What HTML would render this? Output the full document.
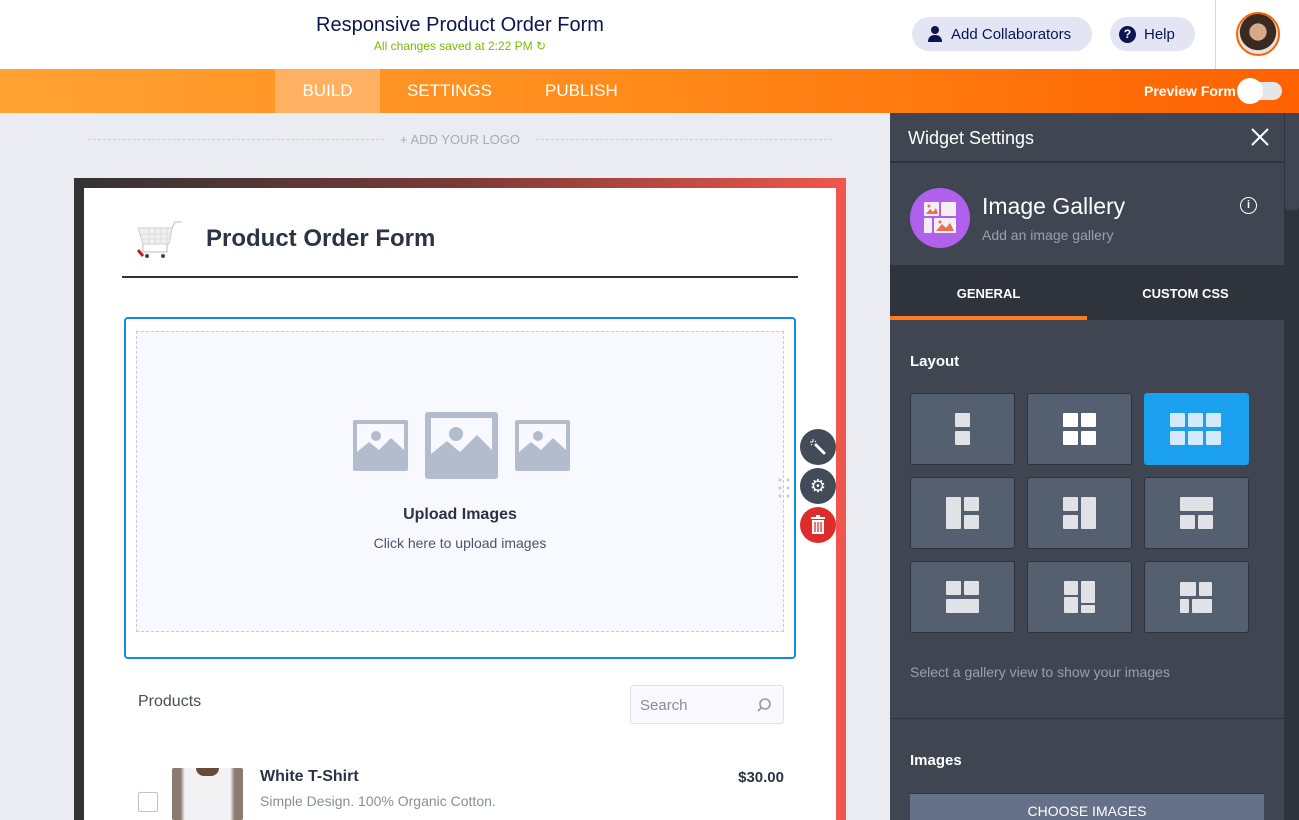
<!DOCTYPE html>
<html style="width:1299px;height:820px;overflow:hidden"><head><meta charset="utf-8"><style>
*{box-sizing:border-box;margin:0;padding:0}
html,body{width:1299px;height:820px;overflow:hidden}
body{font-family:"Liberation Sans",sans-serif;background:#ebecf1;position:relative}
.a{position:absolute}
.tile{position:absolute;width:105px;height:72px;background:#545f6f;border:1px solid #2f343c;border-radius:3px}
.tile.sel{background:#1ba0ef;border-color:#1ba0ef}
.tile i{position:absolute;background:#e0e2e6;border-radius:1px}
.tile.sel i{background:#d4e9f9}
</style></head><body>
<div class="a" style="left:0;top:0;width:1299px;height:69px;background:#fff"></div>
<div class="a" style="left:260px;top:14px;width:400px;text-align:center;font-size:20px;color:#0a1551">Responsive Product Order Form</div>
<div class="a" style="left:260px;top:39px;width:400px;text-align:center;font-size:12px;color:#78bb07">All changes saved at 2:22 PM ↻</div>
<div class="a" style="left:912px;top:17px;width:180px;height:34px;border-radius:17px;background:#e3e5f5;font-size:15px;color:#0a1551;padding:9px 0 0 39px">Add Collaborators</div>
<svg class="a" style="left:926px;top:25px" width="18" height="18" viewBox="0 0 18 18"><circle cx="9" cy="5" r="4" fill="#0a1551"/><path d="M2 17c0-5 3-7 7-7s7 2 7 7z" fill="#0a1551"/></svg>
<div class="a" style="left:1110px;top:17px;width:85px;height:34px;border-radius:17px;background:#e3e5f5;font-size:15px;color:#0a1551;padding:9px 0 0 34px">Help</div>
<div class="a" style="left:1119px;top:26px;width:17px;height:17px;border-radius:50%;background:#0a1551;color:#fff;font-size:12px;font-weight:bold;text-align:center;line-height:17px">?</div>
<div class="a" style="left:1215px;top:0;width:1px;height:69px;background:#d8dae8"></div>
<div class="a" style="left:1236px;top:12px;width:44px;height:44px;border-radius:50%;border:2px solid #ff6100;background:radial-gradient(circle at 50% 45%,#d8a88a 0 28%,#3a2a22 30% 60%,#e8e2dc 62%)"></div>
<div class="a" style="left:0;top:69px;width:1299px;height:44px;background:linear-gradient(90deg,#ffa233,#ff8a1a 50%,#ff6100)"></div>
<div class="a" style="left:275px;top:69px;width:105px;height:44px;background:#ffb061"></div>
<div class="a" style="left:275px;top:81px;width:105px;text-align:center;color:#fff;font-size:17px">BUILD</div>
<div class="a" style="left:407px;top:81px;color:#fff;font-size:17px">SETTINGS</div>
<div class="a" style="left:545px;top:81px;color:#fff;font-size:17px">PUBLISH</div>
<div class="a" style="left:1144px;top:83px;color:#fff;font-size:14px;font-weight:bold">Preview Form</div>
<div class="a" style="left:1240px;top:82px;width:42px;height:18px;border-radius:9px;background:#e4e6ea"></div>
<div class="a" style="left:1237px;top:78px;width:26px;height:26px;border-radius:50%;background:#fff"></div>
<div class="a" style="left:88px;top:139px;width:296px;border-top:1px dashed #ccced6"></div>
<div class="a" style="left:536px;top:139px;width:296px;border-top:1px dashed #ccced6"></div>
<div class="a" style="left:384px;top:132px;width:152px;text-align:center;font-size:13px;color:#a8aab5">+ ADD YOUR LOGO</div>
<div class="a" style="left:74px;top:178px;width:772px;height:642px;background:linear-gradient(90deg,#333 0%,#7a3a36 50%,#f0574c 100%)"></div>
<div class="a" style="left:74px;top:188px;width:10px;height:632px;background:#333"></div>
<div class="a" style="left:836px;top:188px;width:10px;height:632px;background:#f0574c"></div>
<div class="a" style="left:84px;top:188px;width:752px;height:632px;background:#fff"></div>
<svg class="a" style="left:135px;top:220px" width="52" height="42" viewBox="0 0 52 42"><path d="M3 8h34l-3 16H8z" fill="#f0f0f0" stroke="#ccc"/><path d="M14 8v16M20 8v16M26 8v16M32 8v16M5 14h31M6 19h30" stroke="#ddd"/><path d="M37 8l3-6h7M8 24v8h24v-8" stroke="#bbb" fill="none"/><circle cx="12" cy="36" r="2" fill="#444"/><circle cx="28" cy="36" r="2" fill="#444"/><path d="M3 30l5 6" stroke="#c02030" stroke-width="3"/></svg>
<div class="a" style="left:206px;top:225px;font-size:24px;font-weight:bold;color:#2c3345">Product Order Form</div>
<div class="a" style="left:122px;top:276px;width:676px;height:2px;background:#2c3345"></div>
<div class="a" style="left:124px;top:317px;width:672px;height:342px;border:2px solid #0f8ddb;border-radius:4px"></div>
<div class="a" style="left:136px;top:331px;width:648px;height:301px;border:1px dashed #c8cad3;background:#f8f9fe"></div>
<svg class="a" style="left:353px;top:412px" width="218" height="68" viewBox="0 0 218 68"><g fill="#b3bccc"><rect x="0" y="8" width="55" height="51" rx="2"/><rect x="72" y="0" width="73" height="67" rx="3"/><rect x="162" y="8" width="55" height="51" rx="2"/></g><g fill="#f8f9fe"><rect x="4" y="12" width="47" height="34"/><rect x="78" y="6" width="61" height="46"/><rect x="166" y="12" width="47" height="34"/></g><g fill="#b3bccc"><circle cx="23" cy="24" r="5"/><path d="M4 46v-6l12-10 10 8 12-12 13 12v8z"/><circle cx="103" cy="22" r="7"/><path d="M78 52v-10l16-13 13 11 17-17 15 15v14z"/><circle cx="185" cy="24" r="5"/><path d="M166 46v-6l12-10 10 8 12-12 13 12v8z"/></g></svg>
<div class="a" style="left:136px;top:506px;width:648px;text-align:center;font-size:16px;font-weight:bold;color:#2c3345">Upload Images</div>
<div class="a" style="left:136px;top:535px;width:648px;text-align:center;font-size:14px;color:#4a5468">Click here to upload images</div>
<svg class="a" style="left:778px;top:478px" width="12" height="20"><g fill="#c8ccd8"><circle cx="2" cy="2" r="1.5"/><circle cx="10" cy="2" r="1.5"/><circle cx="2" cy="10" r="1.5"/><circle cx="10" cy="10" r="1.5"/><circle cx="2" cy="18" r="1.5"/><circle cx="10" cy="18" r="1.5"/></g></svg>
<div class="a" style="left:800px;top:429px;width:36px;height:36px;border-radius:50%;background:#434a58"></div>
<svg class="a" style="left:808px;top:437px" width="20" height="20" viewBox="0 0 20 20"><path d="M8 8l8 8" stroke="#fff" stroke-width="3" stroke-linecap="round"/><path d="M5 2v3M2 5h3M8 4l-1 1M3 8l1-1" stroke="#fff" stroke-width="1"/></svg>
<div class="a" style="left:800px;top:468px;width:36px;height:36px;border-radius:50%;background:#434a58;color:#fff;font-size:18px;text-align:center;line-height:36px">⚙</div>
<div class="a" style="left:800px;top:507px;width:36px;height:36px;border-radius:50%;background:#dc2c2c"></div>
<svg class="a" style="left:810px;top:515px" width="16" height="20" viewBox="0 0 16 20"><rect x="1" y="2" width="14" height="2" fill="#fff"/><rect x="6" y="0" width="4" height="2" fill="#fff"/><path d="M2 5h12v14H2z" fill="#fff"/><path d="M5 7v10M8 7v10M11 7v10" stroke="#dc2c2c" stroke-width="1.3"/></svg>
<div class="a" style="left:138px;top:693px;font-size:16px;color:#4a4d55">Products</div>
<div class="a" style="left:630px;top:685px;width:154px;height:39px;border:1px solid #dfe1ea;border-radius:3px;background:#f8f8fe;font-size:15px;color:#888d9a;padding:11px 0 0 9px">Search</div>
<svg class="a" style="left:756px;top:697px" width="16" height="16"><circle cx="9" cy="7" r="5" fill="none" stroke="#999" stroke-width="1.6"/><path d="M5 11l-3 3" stroke="#999" stroke-width="1.6"/></svg>
<div class="a" style="left:138px;top:792px;width:20px;height:20px;border:1px solid #bfc3cc;border-radius:2px"></div>
<div class="a" style="left:172px;top:768px;width:71px;height:52px;background:linear-gradient(90deg,#8a7a70 0 12%,#f2f2f4 18% 82%,#8a7a70 88%);border-radius:2px"></div>
<div class="a" style="left:196px;top:768px;width:23px;height:8px;background:#6a4a3a;border-radius:0 0 10px 10px"></div>
<div class="a" style="left:260px;top:768px;font-size:16px;font-weight:bold;color:#2c3345">White T-Shirt</div>
<div class="a" style="left:260px;top:793px;font-size:14px;color:#8a8e98">Simple Design. 100% Organic Cotton.</div>
<div class="a" style="left:700px;top:769px;width:84px;text-align:right;font-size:15px;font-weight:bold;color:#2c3345">$30.00</div>
<div class="a" style="left:890px;top:113px;width:409px;height:707px;background:#3f4551"></div>
<div class="a" style="left:1284px;top:113px;width:15px;height:707px;background:#2f333b"></div>
<div class="a" style="left:1285px;top:113px;width:14px;height:97px;background:#3f4551;border-radius:0 0 4px 4px"></div>
<div class="a" style="left:908px;top:128px;font-size:18px;color:#fff">Widget Settings</div>
<svg class="a" style="left:1251px;top:128px" width="18" height="18"><path d="M1 1l16 16M17 1L1 17" stroke="#fff" stroke-width="2"/></svg>
<div class="a" style="left:890px;top:161px;width:394px;height:2px;background:#2f333b"></div>
<div class="a" style="left:910px;top:188px;width:60px;height:60px;border-radius:50%;background:#b061ec"></div>
<svg class="a" style="left:924px;top:202px" width="32" height="32" viewBox="0 0 32 32"><g fill="#f3eef8"><rect x="0" y="0" width="15" height="14" rx="1"/><rect x="17" y="0" width="15" height="14" rx="1"/><rect x="0" y="16" width="8" height="15" rx="1"/><rect x="10" y="16" width="22" height="15" rx="1"/></g><g fill="#e8704a"><path d="M2 12l4-5 3 3 3-4 2 6z"/><path d="M12 29l6-7 4 4 4-5 4 8z"/><circle cx="5" cy="4" r="1.5"/><circle cx="16" cy="20" r="1.5"/></g></svg>
<div class="a" style="left:982px;top:193px;font-size:23px;color:#fff">Image Gallery</div>
<div class="a" style="left:982px;top:227px;font-size:14px;color:#98a0ae">Add an image gallery</div>
<div class="a" style="left:1240px;top:197px;width:17px;height:17px;border-radius:50%;border:1.6px solid #fff;color:#fff;font-size:11px;font-weight:bold;text-align:center;line-height:14px">i</div>
<div class="a" style="left:890px;top:265px;width:394px;height:55px;background:#2f333b"></div>
<div class="a" style="left:890px;top:286px;width:197px;text-align:center;font-size:13px;font-weight:bold;color:#fff">GENERAL</div>
<div class="a" style="left:1087px;top:286px;width:197px;text-align:center;font-size:13px;font-weight:bold;color:#fff">CUSTOM CSS</div>
<div class="a" style="left:890px;top:316px;width:197px;height:4px;background:#ff7b1c"></div>
<div class="a" style="left:910px;top:353px;font-size:15px;font-weight:bold;color:#fff">Layout</div>
<div class="tile" style="left:910px;top:393px"><i style="left:44px;top:19px;width:15px;height:14px"></i><i style="left:44px;top:37px;width:15px;height:14px"></i></div>
<div class="tile" style="left:1027px;top:393px"><i style="left:35px;top:19px;width:15px;height:14px;background:#fff"></i><i style="left:53px;top:19px;width:15px;height:14px;background:#fff"></i><i style="left:35px;top:37px;width:15px;height:14px;background:#fff"></i><i style="left:53px;top:37px;width:15px;height:14px;background:#fff"></i></div>
<div class="tile sel" style="left:1144px;top:393px"><i style="left:25px;top:19px;width:15px;height:14px"></i><i style="left:43px;top:19px;width:15px;height:14px"></i><i style="left:61px;top:19px;width:15px;height:14px"></i><i style="left:25px;top:37px;width:15px;height:14px"></i><i style="left:43px;top:37px;width:15px;height:14px"></i><i style="left:61px;top:37px;width:15px;height:14px"></i></div>
<div class="tile" style="left:910px;top:477px"><i style="left:35px;top:19px;width:15px;height:32px"></i><i style="left:53px;top:19px;width:15px;height:14px"></i><i style="left:53px;top:37px;width:15px;height:14px"></i></div>
<div class="tile" style="left:1027px;top:477px"><i style="left:35px;top:19px;width:15px;height:14px"></i><i style="left:35px;top:37px;width:15px;height:14px"></i><i style="left:53px;top:19px;width:15px;height:32px"></i></div>
<div class="tile" style="left:1144px;top:477px"><i style="left:35px;top:19px;width:33px;height:14px"></i><i style="left:35px;top:37px;width:15px;height:14px"></i><i style="left:53px;top:37px;width:15px;height:14px"></i></div>
<div class="tile" style="left:910px;top:561px"><i style="left:35px;top:19px;width:15px;height:14px"></i><i style="left:53px;top:19px;width:15px;height:14px"></i><i style="left:35px;top:37px;width:33px;height:14px"></i></div>
<div class="tile" style="left:1027px;top:561px"><i style="left:36px;top:19px;width:14px;height:14px"></i><i style="left:36px;top:35px;width:14px;height:16px"></i><i style="left:53px;top:19px;width:14px;height:22px"></i><i style="left:53px;top:43px;width:14px;height:8px"></i></div>
<div class="tile" style="left:1144px;top:561px"><i style="left:35px;top:20px;width:16px;height:14px"></i><i style="left:54px;top:20px;width:13px;height:14px"></i><i style="left:35px;top:37px;width:9px;height:14px"></i><i style="left:47px;top:37px;width:20px;height:14px"></i></div>
<div class="a" style="left:910px;top:664px;font-size:14px;color:#98a0ae">Select a gallery view to show your images</div>
<div class="a" style="left:890px;top:718px;width:394px;height:1px;background:#2f333b"></div>
<div class="a" style="left:910px;top:752px;font-size:15px;font-weight:bold;color:#fff">Images</div>
<div class="a" style="left:910px;top:793px;width:354px;height:27px;background:#657188;border-top:1px solid #2f333b;text-align:center;font-size:14px;color:#fff;padding-top:9px">CHOOSE IMAGES</div>
</body></html>
